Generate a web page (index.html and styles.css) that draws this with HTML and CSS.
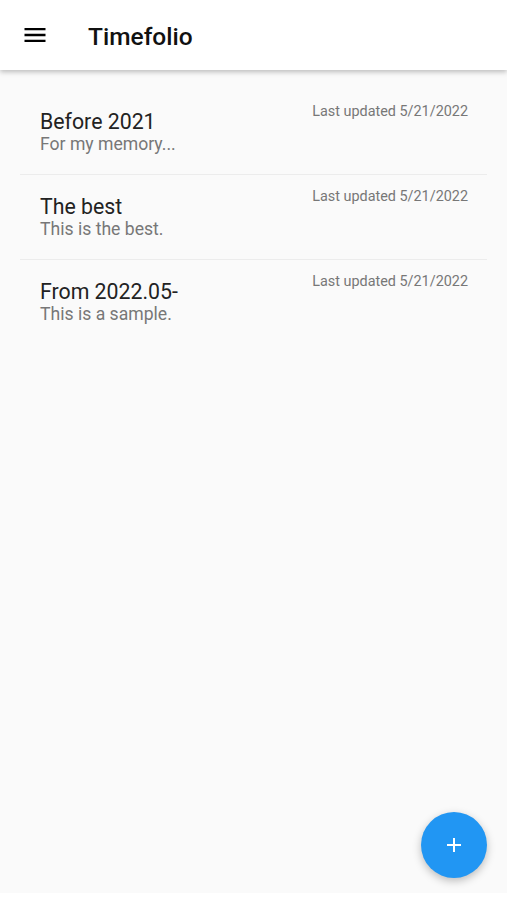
FILE: index.html
```html
<!DOCTYPE html>
<html lang="en">
  <head>
    <meta charset="UTF-8" />
    <meta name="viewport" content="width=device-width, initial-scale=1.0" />
    <title>Timefolio</title>
    <link rel="stylesheet" href="styles.css">
  </head>
  <body>
    <div class="app">
      <header class="app-bar">
        <button class="menu-btn" aria-label="Menu">
          <svg width="24" height="24" viewBox="0 0 24 24">
            <path d="M3 18h18v-2H3v2zm0-5h18v-2H3v2zm0-7v2h18V6H3z" fill="#000" />
          </svg>
        </button>
        <h1 class="app-title">Timefolio</h1>
      </header>

      <ul class="folio-list">
        <li class="folio-item">
          <div class="folio-text">
            <div class="folio-title">Before 2021</div>
            <div class="folio-desc">For my memory...</div>
          </div>
          <div class="folio-date">Last updated 5/21/2022</div>
        </li>
        <li class="folio-item">
          <div class="folio-text">
            <div class="folio-title">The best</div>
            <div class="folio-desc">This is the best.</div>
          </div>
          <div class="folio-date">Last updated 5/21/2022</div>
        </li>
        <li class="folio-item">
          <div class="folio-text">
            <div class="folio-title">From 2022.05-</div>
            <div class="folio-desc">This is a sample.</div>
          </div>
          <div class="folio-date">Last updated 5/21/2022</div>
        </li>
      </ul>

      <!-- add new folio -->
      <button class="fab" aria-label="Add">
        <svg width="24" height="24" viewBox="0 0 24 24">
          <path d="M19 13h-6v6h-2v-6H5v-2h6V5h2v6h6v2z" fill="#fff" />
        </svg>
      </button>
    </div>
  </body>
</html>
```

FILE: styles.css
```css
html,
body {
  margin: 0;
  padding: 0;
  background-color: #fff;
  font-family: Roboto, "Liberation Sans", sans-serif;
}

/* Main screen */
.app {
  position: relative;
  height: 893px;
  background-color: #fafafa;
  overflow: hidden;
}

/* Top bar */
.app-bar {
  display: flex;
  align-items: center;
  height: 70px;
  padding: 0 12px;
  background-color: #fff;
  box-shadow: 0 2px 5px rgba(0, 0, 0, 0.25);
  position: relative;
  z-index: 1;
}

.menu-btn {
  display: flex;
  align-items: center;
  justify-content: center;
  width: 46px;
  height: 46px;
  padding: 0;
  border: none;
  background: none;
}

.menu-btn svg {
  width: 28px;
  height: 28px;
}

.app-title {
  margin: 2px 0 0 30px;
  font-size: 24.5px;
  font-weight: 500;
  color: #111;
}

/* List of folios */
.folio-list {
  list-style: none;
  margin: 0;
  padding: 20px 20px 0;
}

.folio-item {
  display: flex;
  justify-content: space-between;
  height: 85px;
  padding: 0 19px 0 20px;
  border-bottom: 1px solid #ececec;
  box-sizing: border-box;
}

.folio-item:last-child {
  border-bottom: none;
}

.folio-text {
  padding-top: 19px;
}

.folio-title {
  font-size: 21.3px;
  line-height: 25px;
  color: #222;
}

.folio-desc {
  font-size: 17.6px;
  line-height: 21px;
  color: #777;
}

.folio-date {
  padding-top: 13px;
  font-size: 14.4px;
  color: #777;
}

/* Floating action button */
.fab {
  position: absolute;
  right: 20px;
  bottom: 15px;
  width: 66px;
  height: 66px;
  border: none;
  border-radius: 50%;
  background-color: #2196f3;
  box-shadow: 0 3px 8px rgba(0, 0, 0, 0.25);
  display: flex;
  align-items: center;
  justify-content: center;
  cursor: pointer;
}
```
